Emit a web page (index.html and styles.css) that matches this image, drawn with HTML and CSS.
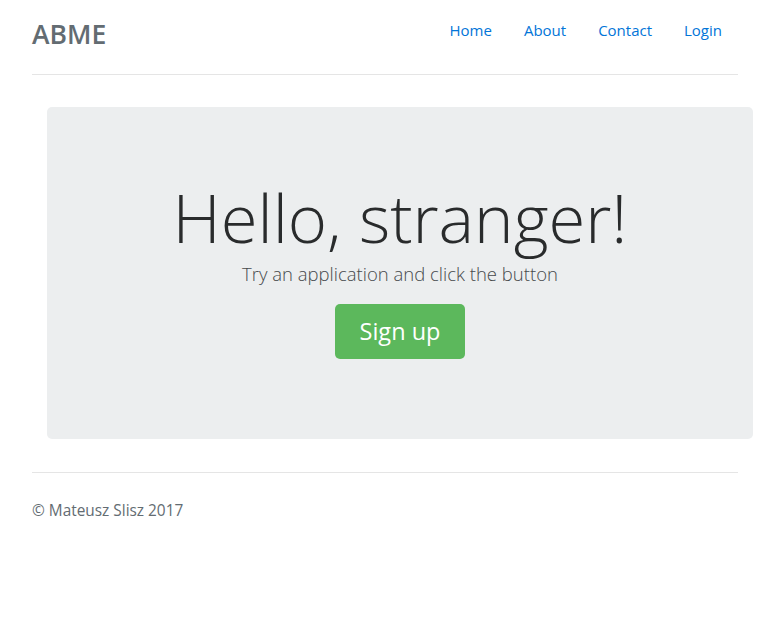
FILE: index.html
```html
<!DOCTYPE html>
<html lang="en">
<head>
<meta charset="utf-8">
<title>ABME</title>
<link rel="stylesheet" href="styles.css">
</head>
<body>
<div class="container">
  <header class="header">
    <h3 class="brand">ABME</h3>
    <nav class="nav">
      <a class="nav-link" href="#">Home</a>
      <a class="nav-link" href="#">About</a>
      <a class="nav-link" href="#">Contact</a>
      <a class="nav-link" href="#">Login</a>
    </nav>
  </header>
  <main class="jumbotron">
    <h1 class="display">Hello, stranger!</h1>
    <p class="lead">Try an application and click the button</p>
    <a class="btn" href="#">Sign up</a>
  </main>
  <footer class="footer">
    <p>© Mateusz Slisz 2017</p>
  </footer>
</div>
</body>
</html>
```
FILE: styles.css
```css
* { box-sizing: border-box; }
html, body { margin: 0; padding: 0; background: #fff; }
body {
  font-family: "Open Sans", "Noto Sans", sans-serif;
  font-size: 15px;
  line-height: 24px;
  color: #292b2c;
}
.container {
  padding: 10px 34px 0 32px;
}
.header {
  display: flex;
  justify-content: space-between;
  align-items: flex-start;
  padding-bottom: 16px;
  border-bottom: 1px solid #e5e5e5;
}
.brand {
  margin: 0;
  font-size: 26.5px;
  line-height: 48px;
  font-weight: 600;
  color: #636c72;
}
.nav { display: flex; }
.nav-link {
  padding: 8px 16px;
  color: #0275d8;
  text-decoration: none;
  font-size: 15px;
  line-height: 24px;
}
.jumbotron {
  margin: 32px -15px 0 15px;
  padding: 72px 32px 80px;
  background: #eceeef;
  border-radius: 5px;
  text-align: center;
}
.display {
  margin: 0;
  font-size: 67px;
  font-weight: 300;
  line-height: 76px;
  color: #292b2c;
}
.lead {
  margin: 4px 0 15px;
  font-size: 18.5px;
  font-weight: 300;
  line-height: 30px;
  color: #464a4c;
}
.btn {
  display: inline-block;
  width: 130px;
  height: 55px;
  line-height: 55px;
  background: #5cb85c;
  color: #fff;
  border-radius: 5px;
  font-size: 23.5px;
  text-decoration: none;
}
.footer {
  margin-top: 33px;
  border-top: 1px solid #e5e5e5;
  padding-top: 26px;
}
.footer p {
  margin: 0;
  color: #636c72;
  font-size: 15.4px;
}
```
